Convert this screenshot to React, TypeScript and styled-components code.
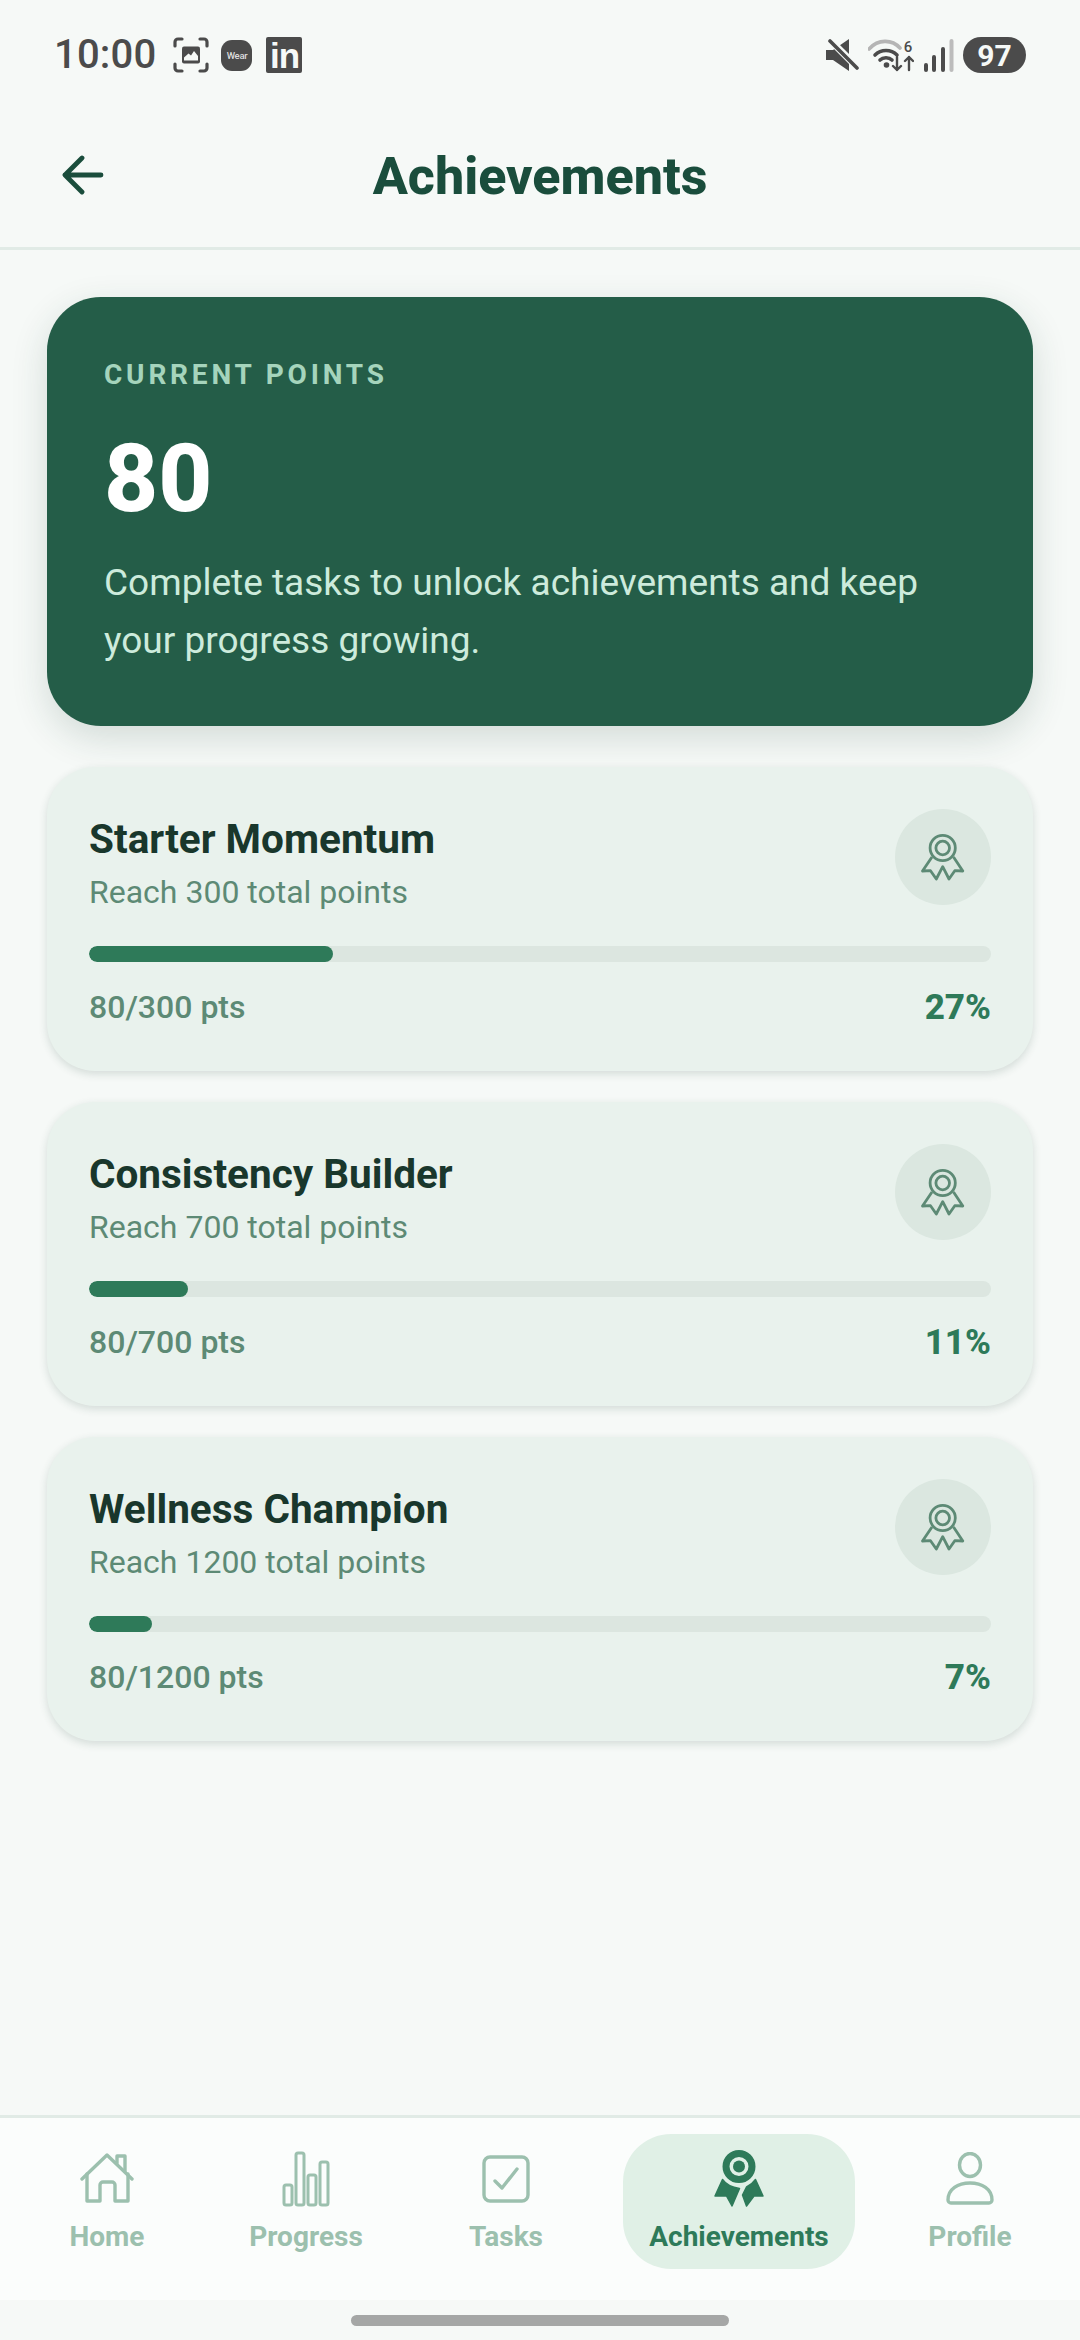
import React from "react";
import styled, { createGlobalStyle } from "styled-components";

const Global = createGlobalStyle`
  html, body { margin: 0; padding: 0; background: #f6f9f7; }
  * { box-sizing: border-box; }
`;

const Screen = styled.div`
  width: 1080px; height: 2340px; display: flex; flex-direction: column;
  background: #f6f9f7; font-family: Roboto, "Liberation Sans", sans-serif; overflow: hidden;
`;

const StatusBar = styled.div`
  height: 105px; flex: none; display: flex; align-items: flex-start; justify-content: space-between;
  padding: 36px 54px 0 54px; color: #4b4b4b;
`;
const StatusGroup = styled.div<{ $gap: number }>`
  display: flex; align-items: center; gap: ${(p) => p.$gap}px; height: 38px;
`;
const Clock = styled.span`
  font-size: 40px; line-height: 38px; font-weight: 500; letter-spacing: 0.2px; margin-right: 5px;
`;
const WearBadge = styled.span`
  width: 31px; height: 31px; border-radius: 11px; background: #4b4b4b; color: #ddd;
  font-size: 9.5px; font-weight: 500; display: flex; align-items: center; justify-content: center; letter-spacing: -0.3px;
`;
const LinkedIn = styled.span`
  width: 36px; height: 36px; margin-left: 2px; border-radius: 2px; background: #4b4b4b; color: #f6f9f7;
  font-family: "Liberation Sans", sans-serif; font-size: 35px; font-weight: 700; line-height: 37px; text-align: center; letter-spacing: -1px;
`;
const Battery = styled.span`
  width: 63px; height: 36px; border-radius: 18px; background: #4b4b4b; color: #f6f9f7;
  font-size: 30px; font-weight: 700; display: flex; align-items: center; justify-content: center;
`;

const Header = styled.header`
  height: 145px; flex: none; display: flex; align-items: center; justify-content: center; position: relative;
  border-bottom: 3px solid #e1ebe6;
`;
const BackButton = styled.span`
  position: absolute; left: 62px; top: 50px; display: flex;
`;
const PageTitle = styled.h1`
  margin: 0; font-size: 52px; line-height: 62px; font-weight: 800; color: #1a4d3c; padding-top: 1px;
`;

const Main = styled.main`
  flex: 1; min-height: 0; padding: 47px 47px 0; display: flex; flex-direction: column; gap: 31px;
`;
const Hero = styled.section`
  height: 429px; flex: none; border-radius: 54px; background: #245d48; padding: 60px 57px 0;
  box-shadow: 0 12px 36px rgba(30, 70, 55, 0.16); margin-bottom: 10px;
`;
const HeroLabel = styled.div`
  font-size: 28px; line-height: 36px; font-weight: 700; letter-spacing: 3.8px; color: #a5d4bc;
`;
const HeroValue = styled.div`
  font-size: 94px; line-height: 112px; font-weight: 800; color: #fff; margin-top: 30px;
`;
const HeroText = styled.p`
  margin: 19px 0 0; font-size: 37px; line-height: 58px; color: #cdebdc; font-weight: 400;
`;

const Card = styled.article`
  height: 304px; flex: none; border-radius: 48px; background: #e9f2ed; padding: 42px 42px 0;
  box-shadow: 0 3px 9px rgba(30, 70, 55, 0.16); display: flex; flex-direction: column;
`;
const CardTop = styled.div`
  display: flex; justify-content: space-between; align-items: flex-start; height: 137px; flex: none;
`;
const CardCopy = styled.div`
  padding-top: 4px;
`;
const CardTitle = styled.h2`
  margin: 0; font-size: 40.5px; line-height: 52px; font-weight: 700; color: #19372c;
`;
const CardSub = styled.div`
  font-size: 32px; line-height: 46px; color: #5d8a75; margin-top: 4px;
`;
const Medal = styled.div`
  width: 96px; height: 96px; border-radius: 50%; background: #dbe7e0; display: flex; align-items: center; justify-content: center;
`;
const Track = styled.div`
  height: 16px; border-radius: 8px; background: #dce6e0; overflow: hidden; flex: none;
`;
const Fill = styled.div`
  height: 100%; border-radius: 8px; background: #2e7a59;
`;
const CardFoot = styled.div`
  display: flex; justify-content: space-between; align-items: center; margin-top: 23px; height: 44px;
`;
const Pts = styled.span`
  font-size: 32px; font-weight: 500; color: #5d8a75;
`;
const Pct = styled.span`
  font-size: 35px; font-weight: 800; color: #2e7a59;
`;

const Nav = styled.nav`
  height: 185px; flex: none; background: #fbfdfc; border-top: 3px solid #e1ebe6;
  display: grid; grid-template-columns: 214px 184px 216px 246px 220px; align-items: start; padding-top: 16px;
`;
const NavItem = styled.div<{ $active?: boolean }>`
  height: 135px; border-radius: 48px; display: flex; flex-direction: column; align-items: center;
  padding-top: 16px; background: ${(p) => (p.$active ? "#e0f0e6" : "transparent")};
  color: ${(p) => (p.$active ? "#2e7a59" : "#9cc0ae")};
  ${(p) => (p.$active ? "width: 232px; margin-left: 9px;" : "")}
`;
const IconSlot = styled.div`
  height: 57px; display: flex; align-items: center; justify-content: center;
`;
const NavLabel = styled.span`
  font-size: 28px; line-height: 34px; font-weight: 700; margin-top: 13px;
`;
const GestureArea = styled.div`
  height: 40px; flex: none; display: flex; justify-content: center; padding-top: 15px; background: #f6f9f7;
`;
const GestureBar = styled.div`
  width: 378px; height: 11px; border-radius: 6px; background: #a5a7a6;
`;

const s = { fill: "none", stroke: "currentColor", strokeLinecap: "round" as const, strokeLinejoin: "round" as const };

const ScanIcon = () => (
  <svg width="36" height="36" viewBox="0 0 36 36" {...s} strokeWidth="3.2">
    <path d="M2 9V5a3 3 0 0 1 3-3h4M27 2h4a3 3 0 0 1 3 3v4M34 27v4a3 3 0 0 1-3 3h-4M9 34H5a3 3 0 0 1-3-3v-4" />
    <path d="M9 11.5a2 2 0 0 1 2-2h14a2 2 0 0 1 2 2v13a2 2 0 0 1-2 2H11a2 2 0 0 1-2-2z" fill="currentColor" stroke="none" />
    <path d="M11 23.5v-3l4.5-4 2.5 2 3-4.5 4 5v4.5z" fill="#f6f9f7" stroke="none" />
  </svg>
);
const MuteIcon = () => (
  <svg width="33" height="32" viewBox="0 0 33 32">
    <path d="M0 11h7L23 0v32L7 21H0z" fill="currentColor" />
    <path d="M2 -1l30 30" stroke="#f6f9f7" strokeWidth="7" />
    <path d="M4 2l27 27" stroke="currentColor" strokeWidth="3.6" strokeLinecap="round" />
  </svg>
);
const WifiIcon = () => (
  <svg width="46" height="38" viewBox="0 -4 46 38" {...s}>
    <path d="M1 9C10 -1 24 -1 32 8" stroke="#b5b5b5" strokeWidth="3.6" />
    <path d="M7 15c6-6 16-6 22 0M12 20c3-3 9-3 12 0" strokeWidth="3.6" />
    <circle cx="18.5" cy="25" r="2.8" fill="currentColor" stroke="none" />
    <path d="M29 17v13M25 26l4 4 4-4M41 30V17M37 21l4-4 4 4" strokeWidth="2.4" />
    <text x="40" y="12" textAnchor="middle" fontFamily="Roboto, sans-serif" fontSize="15" fontWeight="500" fill="currentColor" stroke="none">6</text>
  </svg>
);
const SignalIcon = () => (
  <svg width="31" height="33" viewBox="0 0 31 33" {...s} strokeWidth="4">
    <path d="M3 26v5M11 18v13M20 10v21" />
    <path d="M28.5 2v29" stroke="#bcbcbc" />
  </svg>
);
const BackIcon = () => (
  <svg width="42" height="40" viewBox="0 0 42 40" fill="none" stroke="#1a4d3c" strokeWidth="4.8" strokeLinecap="round" strokeLinejoin="round">
    <path d="M39 20H3M20 3L3 20l17 17" />
  </svg>
);
const OutlineMedal = () => (
  <svg width="44" height="48" viewBox="0 0 44 48" fill="none" stroke="#5d8a75" strokeWidth="2.8" strokeLinejoin="round">
    <circle cx="21.7" cy="15" r="12.6" />
    <circle cx="21.7" cy="15" r="6.8" />
    <path d="M11 24L1.5 38l8-.3 5.8 8.3 6.4-12.3L28 46l5.8-8.3 8 .3L32.5 24" />
  </svg>
);
const HomeIcon = () => (
  <svg width="54" height="54" viewBox="0 0 54 54" {...s} strokeWidth="3.4">
    <path d="M2 27L27 3l25 24" />
    <path d="M37 11V4h8v15" />
    <path d="M7 22v27h13V33a3 3 0 0 1 3-3h9a3 3 0 0 1 3 3v16h13V22" />
  </svg>
);
const ChartIcon = () => (
  <svg width="48" height="56" viewBox="0 0 48 56" {...s} strokeWidth="3">
    <rect x="2" y="34" width="8" height="20" rx="2" />
    <rect x="14" y="2" width="8" height="52" rx="2" />
    <rect x="26" y="24" width="8" height="30" rx="2" />
    <rect x="38" y="11" width="8" height="43" rx="2" />
  </svg>
);
const TaskIcon = () => (
  <svg width="48" height="48" viewBox="0 0 48 48" {...s} strokeWidth="3.4">
    <rect x="2" y="2" width="44" height="44" rx="6" />
    <path d="M13 26l7 7 15-19" />
  </svg>
);
const SolidMedal = () => (
  <svg width="50" height="57" viewBox="0 0 50 57">
    <circle cx="25" cy="16.5" r="13" fill="none" stroke="currentColor" strokeWidth="7" />
    <circle cx="25" cy="16.5" r="6" fill="currentColor" />
    <path d="M8.5 29.5C12 34.5 18 37.5 25.5 38.5L18 56 12.5 46H1z" fill="currentColor" stroke="currentColor" strokeWidth="1.5" strokeLinejoin="round" />
    <path d="M41.5 29.5C39 33 36 35.5 32.5 37L28.5 45 32.5 56 40 46h9z" fill="currentColor" stroke="currentColor" strokeWidth="1.5" strokeLinejoin="round" />
  </svg>
);
const UserIcon = () => (
  <svg width="48" height="54" viewBox="0 0 48 54" {...s} strokeWidth="3.4">
    <ellipse cx="24" cy="13" rx="10.5" ry="11.5" />
    <path d="M2 48c0-11 10-17 22-17s22 6 22 17a3 3 0 0 1-3 3H5a3 3 0 0 1-3-3z" />
  </svg>
);

const achievements = [
  { title: "Starter Momentum", goal: 300, pct: 27 },
  { title: "Consistency Builder", goal: 700, pct: 11 },
  { title: "Wellness Champion", goal: 1200, pct: 7 },
];

const navItems = [
  { label: "Home", icon: <HomeIcon /> },
  { label: "Progress", icon: <ChartIcon /> },
  { label: "Tasks", icon: <TaskIcon /> },
  { label: "Achievements", icon: <SolidMedal />, active: true },
  { label: "Profile", icon: <UserIcon /> },
];

export default function App() {
  return (
    <Screen>
      <Global />
      <StatusBar>
        <StatusGroup $gap={12}>
          <Clock>10:00</Clock>
          <ScanIcon />
          <WearBadge>Wear</WearBadge>
          <LinkedIn>in</LinkedIn>
        </StatusGroup>
        <StatusGroup $gap={9}>
          <MuteIcon />
          <WifiIcon />
          <SignalIcon />
          <Battery>97</Battery>
        </StatusGroup>
      </StatusBar>
      <Header>
        <BackButton><BackIcon /></BackButton>
        <PageTitle>Achievements</PageTitle>
      </Header>
      <Main>
        <Hero>
          <HeroLabel>CURRENT POINTS</HeroLabel>
          <HeroValue>80</HeroValue>
          <HeroText>Complete tasks to unlock achievements and keep your progress growing.</HeroText>
        </Hero>
        {achievements.map((a) => (
          <Card key={a.title}>
            <CardTop>
              <CardCopy>
                <CardTitle>{a.title}</CardTitle>
                <CardSub>Reach {a.goal} total points</CardSub>
              </CardCopy>
              <Medal><OutlineMedal /></Medal>
            </CardTop>
            <Track><Fill style={{ width: `${a.pct}%` }} /></Track>
            <CardFoot>
              <Pts>80/{a.goal} pts</Pts>
              <Pct>{a.pct}%</Pct>
            </CardFoot>
          </Card>
        ))}
      </Main>
      <Nav>
        {navItems.map((n) => (
          <NavItem key={n.label} $active={n.active}>
            <IconSlot>{n.icon}</IconSlot>
            <NavLabel>{n.label}</NavLabel>
          </NavItem>
        ))}
      </Nav>
      <GestureArea><GestureBar /></GestureArea>
    </Screen>
  );
}
